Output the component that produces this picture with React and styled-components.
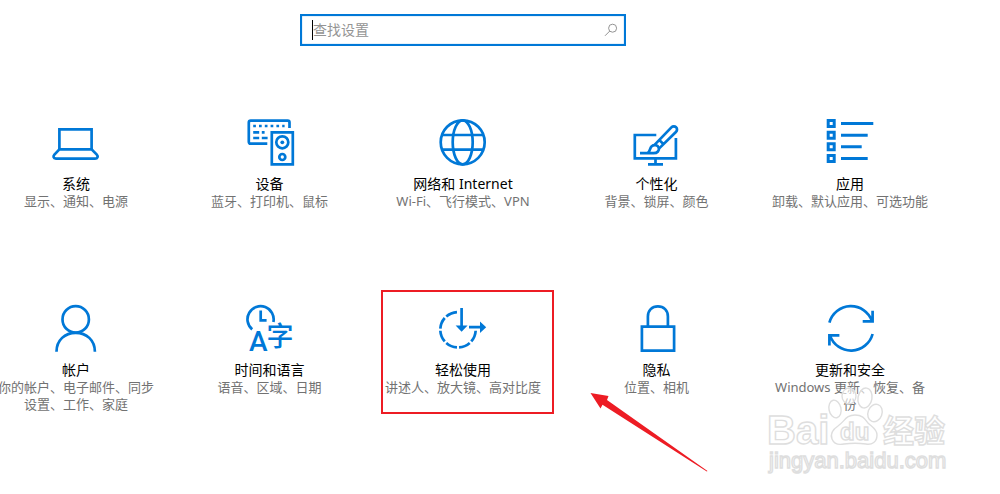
import React from 'react'
import styled, { createGlobalStyle } from 'styled-components'

const GlobalStyle = createGlobalStyle`
  body {
    margin: 0;
    background-color: white;
    font-family: "Noto Sans", "Noto Sans CJK SC", sans-serif;
    overflow-x: hidden;
  }
`

const Container = styled.main`
  padding: 14px 74px 0 0;
`

const SearchForm = styled.form`
  display: flex;
  justify-content: center;
`

const SearchBox = styled.label`
  display: flex;
  align-items: center;
  box-sizing: border-box;
  width: 326px;
  height: 32px;
  padding: 0 6px 0 10px;
  border: 2px solid #0078d7;
  box-shadow: inset 0 0 1px #0078d7;
`

const Caret = styled.span`
  width: 1px;
  height: 20px;
  background-color: black;
`

const SearchInput = styled.input`
  flex: 1;
  min-width: 0;
  padding: 0;
  border: none;
  outline: none;
  background: transparent;
  font-family: inherit;
  font-size: 14px;
  line-height: 20px;

  &::placeholder {
    color: #949494;
    opacity: 1;
  }
`

const Grid = styled.ul`
  margin: 72px -2px 0;
  padding: 0;
  list-style: none;
`

const Row = styled.li`
  display: flex;
  justify-content: space-between;
  min-height: 186px;
`

const Cell = styled.div`
  position: relative;
  width: 156px;
`

const Tile = styled.a`
  display: flex;
  flex-direction: column;
  align-items: center;
  color: black;
  text-align: center;
  text-decoration: none;
`

const Icon = styled.svg`
  width: 48px;
  height: 48px;
  margin-bottom: 8px;
  overflow: visible;
  fill: none;
  stroke: #0078d7;
  stroke-width: 2.7;
`

const Title = styled.span`
  font-size: 14px;
  line-height: 19px;
`

const Desc = styled.span`
  color: #727272;
  font-size: 13px;
  line-height: 17px;
`

const Highlight = styled.div`
  position: absolute;
  top: -14px;
  right: -13px;
  left: -4px;
  height: 120px;
  border: 2px solid #ed1c24;
  pointer-events: none;
`

const Arrow = styled.svg`
  position: absolute;
  top: 88px;
  left: 205px;
  width: 120px;
  height: 82px;
  fill: #ed1c24;
  pointer-events: none;
`

const Watermark = styled.svg`
  position: absolute;
  top: 78px;
  left: -15px;
  width: 200px;
  height: 100px;
  fill: rgba(255, 255, 255, 0.6);
  stroke: #dedede;
  stroke-width: 1.4;
  font-family: "Liberation Sans", "Noto Sans CJK SC", sans-serif;
  pointer-events: none;
`

const icons = {
  system: (
    <>
      <path d="M7.4 31.5V11.3H39.6V31.5" />
      <path d="M7.4 31.3H39.6L44.8 36.6Q46 38 45.5 39.2Q45 40.6 43 40.6H4Q2 40.6 1.6 39.2Q1.2 38 2.4 36.6Z" />
    </>
  ),
  devices: (
    <>
      <path d="M21.3 25.7H4.7Q2.8 25.7 2.8 23.8V4.5Q2.8 2.6 4.7 2.6H41.6Q43.5 2.6 43.5 4.5V10" />
      <path d="M7.2 8H38.6" strokeDasharray="2.7 3.1" />
      <path d="M7.2 14.4H13.2M15.8 14.4H18.6M7.2 20H13.2M15.8 20H21.6" />
      <path d="M25.8 14.3H46.8V46.4H25.8Z" />
      <circle cx="36.3" cy="24.3" r="6" />
      <circle cx="36.3" cy="24.3" r="1.9" fill="#0078d7" stroke="none" />
      <circle cx="36.3" cy="39" r="3" />
    </>
  ),
  network: (
    <>
      <circle cx="23.7" cy="24.3" r="22" />
      <ellipse cx="23.7" cy="24.3" rx="10" ry="22" />
      <path d="M3 17H44.4M3 31.7H44.4" />
    </>
  ),
  personal: (
    <>
      <path d="M23.3 17H1.8V40.3H42.9V20" />
      <path d="M22.5 40.5V46M15 46.4H30" />
      <path d="M7 35.2H20.5C24.5 35.2 26.6 32.5 25.7 29.6C24.8 27 21.2 26.2 18.7 28.2C16.4 30.2 17.6 33 14.6 35" />
      <path d="M21.8 26.6L38.4 9.4C39.8 8 41.9 8.1 43.1 9.3C44.4 10.5 44.3 12.6 42.9 14L26.2 30.4M26.4 22.1L30.6 26.3" />
    </>
  ),
  apps: (
    <g strokeWidth="3">
      <path d="M2.2 2.5H8.2V8.5H2.2ZM2.2 14.2H8.2V20.2H2.2ZM2.2 25.8H8.2V31.8H2.2ZM2.2 37.4H8.2V43.4H2.2Z" />
      <path d="M15 5.5H47.3M15 17.2H41.7M15 28.8H35.7M15 40.4H41.7" />
    </g>
  ),
  accounts: (
    <>
      <circle cx="23.7" cy="15.4" r="13.2" />
      <path d="M4.5 47.7C4.5 36 13 28.8 23.7 28.8S42.9 36 42.9 47.7" />
    </>
  ),
  time: (
    <>
      <path d="M6.2 25.4A13.1 13.1 0 1 1 27.4 18" />
      <path d="M14.7 6.6V16.4H20.6" />
      <g fill="#0078d7" stroke="none">
        <text x="3" y="47.4" fontFamily="Roboto, sans-serif" fontSize="28" fontWeight="500">A</text>
        <text x="20.4" y="42" fontFamily="Noto Sans CJK SC, sans-serif" fontSize="27" fontWeight="500">字</text>
      </g>
    </>
  ),
  ease: (
    <>
      <path d="M36.7 25.7A17.7 17.7 0 1 1 19 8" pathLength="270" strokeDasharray="38 7" strokeDashoffset="-3.5" />
      <path d="M22.6 4V23M30 23.2H42" />
      <path d="M16.6 21.4H28.6L22.6 27.8ZM41 17.4V29L47.2 23.2Z" fill="#0078d7" stroke="none" />
    </>
  ),
  privacy: (
    <>
      <path d="M8.9 22.6H41.1V46.6H8.9Z" />
      <path d="M14.9 22.6V12.4C14.9 6.4 19 2.4 24.9 2.4S34.9 6.4 34.9 12.4V22.6" />
    </>
  ),
  update: (
    <>
      <path d="M3.4 18.7A22.3 22.3 0 0 1 46 17.2M46.6 6.8V17.3H36.7" />
      <path d="M46.6 30A22.3 22.3 0 0 1 4 31.6M3.4 41.6V31.3H13.4" />
    </>
  ),
}

const rows = [
  [
    { icon: 'system', title: '系统', desc: '显示、通知、电源' },
    { icon: 'devices', title: '设备', desc: '蓝牙、打印机、鼠标' },
    { icon: 'network', title: '网络和 Internet', desc: 'Wi-Fi、飞行模式、VPN' },
    { icon: 'personal', title: '个性化', desc: '背景、锁屏、颜色' },
    { icon: 'apps', title: '应用', desc: '卸载、默认应用、可选功能' },
  ],
  [
    { icon: 'accounts', title: '帐户', desc: '你的帐户、电子邮件、同步设置、工作、家庭' },
    { icon: 'time', title: '时间和语言', desc: '语音、区域、日期' },
    { icon: 'ease', title: '轻松使用', desc: '讲述人、放大镜、高对比度', marked: true },
    { icon: 'privacy', title: '隐私', desc: '位置、相机' },
    { icon: 'update', title: '更新和安全', desc: 'Windows 更新、恢复、备份', logo: true },
  ],
]

const BaiduMark = () => (
  <Watermark viewBox="0 0 200 100">
    <text x="10" y="62" fontSize="40" fontWeight="700">Bai</text>
    <ellipse cx="78" cy="27" rx="6" ry="9" transform="rotate(-12 78 27)" />
    <ellipse cx="92" cy="14" rx="7" ry="8" />
    <ellipse cx="108" cy="16" rx="7" ry="10" transform="rotate(10 108 16)" />
    <ellipse cx="118" cy="31" rx="7" ry="9" transform="rotate(20 118 31)" />
    <path d="M98 33C89 33 88 39 81 44C75 48 73 52 75 57C77 62 82 63 87 62C94 61 102 61 109 62C115 63 120 60 120 53C120 47 115 45 111 41C108 37 106 33 98 33Z" />
    <text x="83" y="58" fontSize="24" fontWeight="700">du</text>
    <text x="126" y="60" fontSize="31" fontWeight="700">经验</text>
    <text x="12" y="86" fontSize="22">jingyan.baidu.com</text>
  </Watermark>
)

const App = () => {
  return (
    <Container>
      <GlobalStyle />
      <SearchForm>
        <SearchBox>
          <Caret />
          <SearchInput type="text" placeholder="查找设置" aria-label="查找设置" />
          <svg width="14" height="14" viewBox="0 0 14 14" fill="none" stroke="#949494">
            <circle cx="8.6" cy="5.2" r="4" />
            <path d="M5.8 8L1 12.8" />
          </svg>
        </SearchBox>
      </SearchForm>
      <Grid>
        {rows.map((row, i) => (
          <Row key={i}>
            {row.map((item) => (
              <Cell key={item.icon}>
                <Tile href={`#${item.icon}`}>
                  <Icon viewBox="0 0 48 48">{icons[item.icon]}</Icon>
                  <Title>{item.title}</Title>
                  <Desc>{item.desc}</Desc>
                </Tile>
                {item.marked && (
                  <>
                    <Highlight />
                    <Arrow viewBox="0 0 120 82">
                      <path d="M0.5 1L18.5 4L17 8L117.5 79L116.8 79.6L12.5 12.8L10.5 16.5Z" />
                    </Arrow>
                  </>
                )}
                {item.logo && <BaiduMark />}
              </Cell>
            ))}
          </Row>
        ))}
      </Grid>
    </Container>
  )
}

export default App
